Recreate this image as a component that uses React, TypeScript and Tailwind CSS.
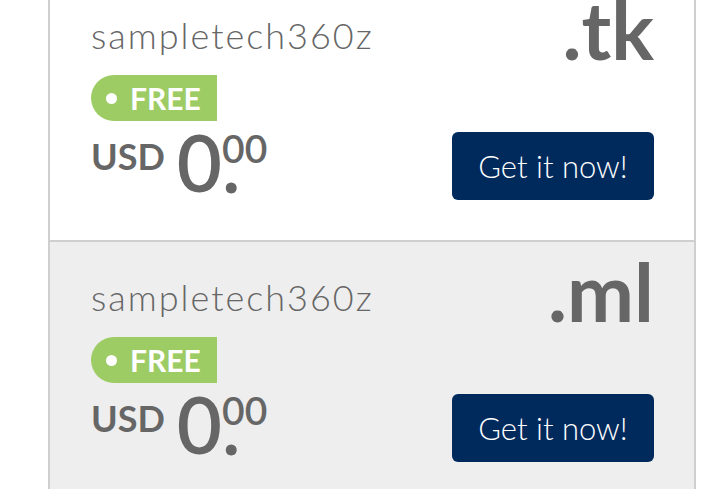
import React from "react";

function Card({ tld, bg }: { tld: string; bg: string }) {
  return (
    <div className={`flex h-[260px] justify-between pl-[41px] pr-[40px] ${bg}`}>
      <div className="flex flex-col">
        <div className="pt-[37px] text-[36px] font-light leading-none tracking-[2px] text-[#666]">sampletech360z</div>
        <div className="mt-[22px] flex h-[46px] w-[126px] items-center rounded-l-full rounded-r-[3px] bg-[#9dcb64]">
          <span className="ml-[15px] h-[11px] w-[11px] rounded-full bg-white"></span>
          <span className="ml-[13px] text-[30px] font-bold leading-none text-white">FREE</span>
        </div>
        <div className="flex items-start pt-[2px] text-[#666]">
          <span className="mt-[15px] text-[36px] font-bold leading-none">USD</span>
          <span className="ml-[12px] text-[78px] font-semibold leading-none">0</span>
          <span className="relative mt-[6px] text-[39px] font-semibold leading-none">
            00
            <span className="absolute left-0 top-[-5px] text-[78px] font-semibold leading-none">.</span>
          </span>
        </div>
      </div>
      <div className="flex flex-col items-end">
        <div className="pt-[9px] text-[80px] font-bold leading-none text-[#666]">{tld}</div>
        <button className="mt-[63px] h-[68px] w-[202px] rounded-[6px] bg-[#012a5c] text-[31px] font-light text-white">
          Get it now!
        </button>
      </div>
    </div>
  );
}

export default function App() {
  return (
    <div className="h-[489px] w-[720px] overflow-hidden bg-white font-['Lato',sans-serif]">
      <div className="-mt-[22px] ml-[48px] w-[648px] border-x-2 border-t-2 border-[#cfcfcf]">
        <Card tld=".tk" bg="bg-white" />
        <div className="border-t-2 border-[#cfcfcf]">
          <Card tld=".ml" bg="bg-[#eeeeee]" />
        </div>
      </div>
    </div>
  );
}
